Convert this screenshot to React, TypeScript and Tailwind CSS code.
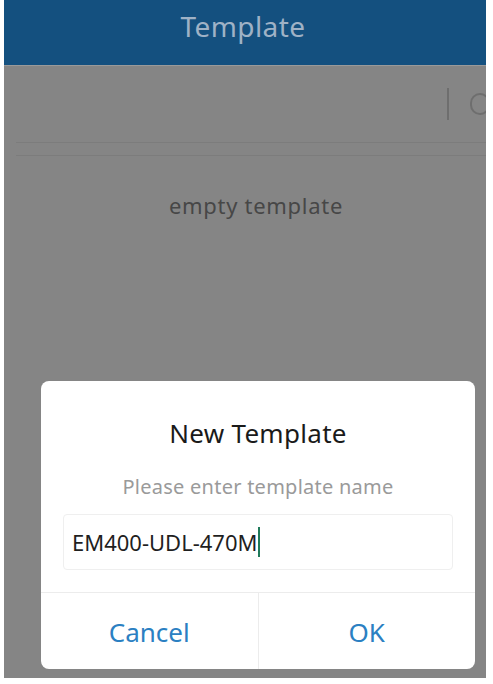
import React from 'react';

const font = { fontFamily: '"Noto Sans", "Open Sans", Arial, sans-serif' };

const App: React.FC = () => {
    return (
        <div className="w-[493px] h-[684px] bg-white" style={font}>
            <div className="relative ml-[4px] w-[482px] h-[678px] bg-[#858585] overflow-hidden">
                <header className="h-[65px] bg-[#14507f] flex items-center justify-center">
                    <h1 className="text-[28px] tracking-[0.4px] text-[#9fb2c6] -mt-[14px] ml-[-4px]">Template</h1>
                </header>
                <div className="h-[77px] border-t border-[#9a9a9a] flex items-center justify-end">
                    <div className="w-[2px] h-[32px] bg-[#6e6e6e] mr-[21px]" />
                    <div className="w-[20px] h-[22px] rounded-full border-2 border-[#6e6e6e] mr-[-4px]" />
                </div>
                <div className="h-[14px] ml-[12px] border-t border-[#7c7c7c] border-b" />
                <p className="text-center text-[22px] tracking-[0.7px] text-[#474747] mt-[33px] ml-[22px]">empty template</p>

                <div className="absolute left-[37px] top-[381px] w-[434px] h-[288px] bg-white rounded-[8px] flex flex-col">
                    <h2 className="text-center text-[26px] tracking-[0.3px] text-[#1a1a1a] mt-[35px] leading-[34px]">New Template</h2>
                    <p className="text-center text-[20px] tracking-[0.25px] text-[#9a9a9a] mt-[24px] leading-[26px]">Please enter template name</p>
                    <div className="mx-[22px] mt-[14px] h-[56px] border border-[#efefef] rounded-[4px] flex items-center px-[8px]">
                        <span className="text-[22px] text-[#1f1f1f]">EM400-UDL-470M</span>
                        <span className="w-[2px] h-[30px] bg-[#1f7a5a] ml-[1px]" />
                    </div>
                    <div className="mt-[22px] border-t border-[#ececec] flex flex-1">
                        <button className="flex-1 pt-[3px] text-[26px] text-[#2b80c2] border-r border-[#ececec]">Cancel</button>
                        <button className="flex-1 pt-[3px] text-[26px] text-[#2b80c2]">OK</button>
                    </div>
                </div>
            </div>
        </div>
    );
};

export default App;
